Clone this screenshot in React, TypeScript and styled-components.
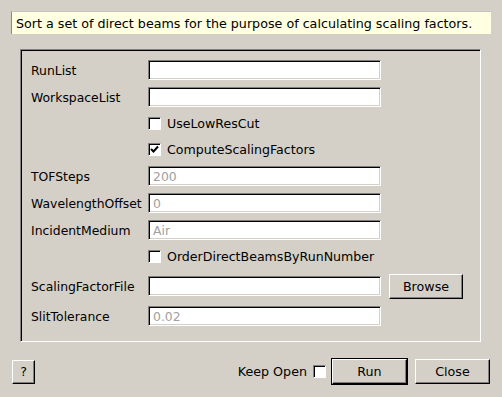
import React from "react";
import styled, { createGlobalStyle } from "styled-components";

const Global = createGlobalStyle`
  html, body { margin: 0; padding: 0; background: #d4d0c8; }
  body { font-family: "DejaVu Sans", "Liberation Sans", sans-serif; font-size: 12.4px; color: #000; }
  * { box-sizing: border-box; }
`;

const Page = styled.div`
  width: 502px;
  height: 397px;
  padding: 11px 11px 0 11px;
  display: flex;
  flex-direction: column;
  background: #d4d0c8;
`;

const Description = styled.div`
  height: 23px;
  background: #ffffe1;
  border-left: 1px solid #8a8a8a;
  border-top: 1px solid #c8c6bc;
  display: flex;
  align-items: center;
  padding-left: 4px;
  font-size: 12.7px;
  white-space: nowrap;
`;

const Frame = styled.div`
  margin: 15px 10px 0 9px;
  border: 1px solid;
  border-color: #808080 #ffffff #ffffff #808080;
  box-shadow: inset 1px 1px 0 #000;
  padding: 10px 0 15px 10px;
  display: grid;
  grid-template-columns: 109px 233px 74px;
  grid-template-rows: 20px 20px 19px 19px 20px 20px 20px 19px 26px 20px;
  column-gap: 8px;
  row-gap: 7px;
  align-items: center;
`;

const Label = styled.div`
  grid-column: 1;
  white-space: nowrap;
`;

const Field = styled.input`
  grid-column: 2;
  width: 233px;
  height: 20px;
  margin: 0;
  padding: 0 0 0 4px;
  font: inherit;
  color: #000;
  background: #fff;
  border: 1px solid;
  border-color: #808080 #ffffff #ffffff #808080;
  box-shadow: inset 1px 1px 0 #000, inset -1px -1px 0 #d4d0c8;
  outline: none;
  &::placeholder { color: #a0a0a0; }
`;

const CheckRow = styled.label`
  grid-column: 2 / span 2;
  display: flex;
  align-items: center;
  gap: 6px;
  white-space: nowrap;
  font-size: 12.6px;
`;

const Box = styled.span`
  width: 13px;
  height: 13px;
  flex: none;
  background: #fff;
  border: 1px solid;
  border-color: #808080 #ffffff #ffffff #808080;
  box-shadow: inset 1px 1px 0 #000;
  display: flex;
  align-items: center;
  justify-content: center;
`;

const Button = styled.button<{ $w: number; $h: number; $default?: boolean }>`
  width: ${(p) => p.$w}px;
  height: ${(p) => p.$h}px;
  margin: 0;
  padding: 0;
  font: inherit;
  font-size: 12.7px;
  color: #000;
  background: #d4d0c8;
  border: 1px solid;
  border-color: #ffffff #000000 #000000 #ffffff;
  box-shadow: inset -1px -1px 0 #808080;
  outline: ${(p) => (p.$default ? "1px solid #000" : "none")};
  outline-offset: 0;
  flex: none;
`;

const BrowseButton = styled(Button)`
  grid-column: 3;
`;

const Bar = styled.div`
  margin-top: 16px;
  padding-left: 1px;
  padding-right: 1px;
  display: flex;
  align-items: center;
  height: 27px;
`;

const Spacer = styled.div`
  flex: 1;
`;

const KeepOpen = styled.label`
  display: flex;
  align-items: center;
  gap: 6px;
  margin-right: 6px;
  font-size: 12.7px;
`;

const CloseWrap = styled.div`
  margin-left: 8px;
`;

const Check = () => (
  <svg width="9" height="9" viewBox="0 0 9 9">
    <path d="M1 4 L3.5 6.5 L8 1.5" stroke="#000" strokeWidth="2" fill="none" />
  </svg>
);

const CheckBox = ({ checked }: { checked?: boolean }) => <Box>{checked ? <Check /> : null}</Box>;

export default function App() {
  return (
    <>
      <Global />
      <Page>
        <Description>Sort a set of direct beams for the purpose of calculating scaling factors.</Description>
        <Frame>
          <Label>RunList</Label>
          <Field readOnly />
          <Label>WorkspaceList</Label>
          <Field readOnly />
          <CheckRow>
            <CheckBox />
            UseLowResCut
          </CheckRow>
          <CheckRow>
            <CheckBox checked />
            ComputeScalingFactors
          </CheckRow>
          <Label>TOFSteps</Label>
          <Field readOnly placeholder="200" />
          <Label>WavelengthOffset</Label>
          <Field readOnly placeholder="0" />
          <Label>IncidentMedium</Label>
          <Field readOnly placeholder="Air" />
          <CheckRow>
            <CheckBox />
            OrderDirectBeamsByRunNumber
          </CheckRow>
          <Label>ScalingFactorFile</Label>
          <Field readOnly />
          <BrowseButton $w={74} $h={25}>Browse</BrowseButton>
          <Label>SlitTolerance</Label>
          <Field readOnly placeholder="0.02" />
        </Frame>
        <Bar>
          <Button $w={23} $h={24}>?</Button>
          <Spacer />
          <KeepOpen>
            Keep Open
            <CheckBox />
          </KeepOpen>
          <Button $w={75} $h={25} $default>Run</Button>
          <CloseWrap>
            <Button $w={75} $h={25}>Close</Button>
          </CloseWrap>
        </Bar>
      </Page>
    </>
  );
}
